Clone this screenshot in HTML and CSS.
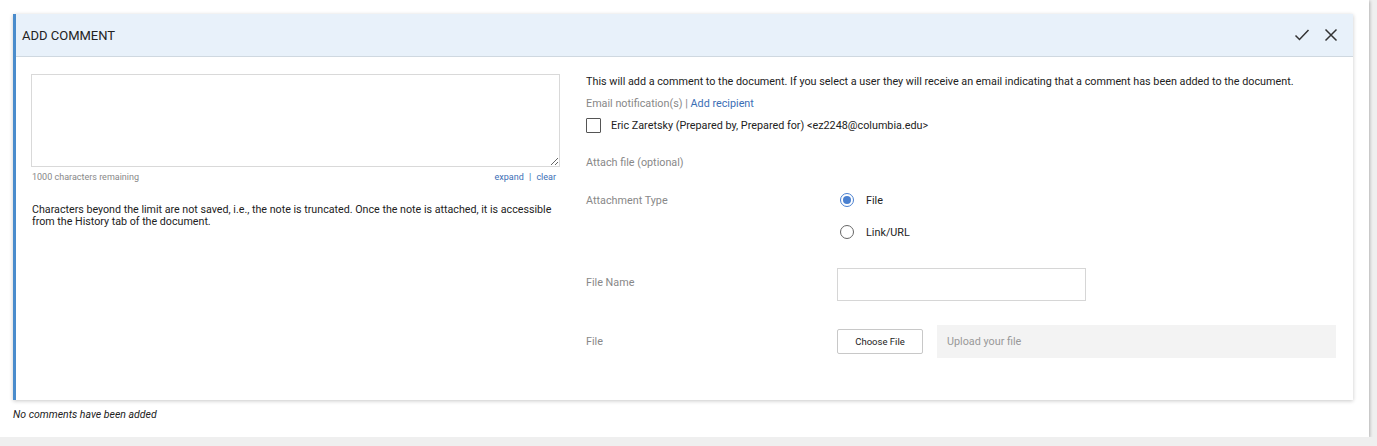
FILE: index.html
```html
<!DOCTYPE html>
<html>
  <head>
    <title>Add Comment</title>
    <link rel="stylesheet" href="styles.css">
  </head>
  <body>
    <div class="page">
      <div class="panel">
        <div class="panel-header">
          <span class="panel-title">ADD COMMENT</span>
          <div class="panel-actions">
            <svg width="16" height="16" viewBox="0 0 16 16" fill="none" stroke="#333" stroke-width="1.5">
              <path d="M1.5 8.5 L5.5 12.5 L14.5 3"/>
            </svg>
            <svg width="14" height="14" viewBox="0 0 14 14" fill="none" stroke="#333" stroke-width="1.5">
              <path d="M1.5 1.5 L12.5 12.5 M12.5 1.5 L1.5 12.5"/>
            </svg>
          </div>
        </div>
        <div class="panel-body">
          <div class="note-col">
            <textarea class="note-input"></textarea>
            <div class="note-meta">
              <span>1000 characters remaining</span>
              <span class="note-links"><a href="#">expand</a> <span class="sep">|</span> <a href="#">clear</a></span>
            </div>
            <p class="note-help">Characters beyond the limit are not saved, i.e., the note is truncated. Once the note is attached, it is accessible from the History tab of the document.</p>
          </div>
          <div class="form-col">
            <p class="intro">This will add a comment to the document. If you select a user they will receive an email indicating that a comment has been added to the document.</p>
            <div class="muted">Email notification(s) | <a href="#">Add recipient</a></div>
            <label class="recipient">
              <span class="box"></span>
              Eric Zaretsky (Prepared by, Prepared for) &lt;ez2248@columbia.edu&gt;
            </label>
            <div class="muted attach-title">Attach file (optional)</div>
            <div class="field-grid">
              <div class="muted field-label type-label">Attachment Type</div>
              <div class="radios">
                <label class="radio"><span class="dot checked"></span>File</label>
                <label class="radio"><span class="dot"></span>Link/URL</label>
              </div>
              <div class="muted field-label">File Name</div>
              <div><input type="text" class="name-input"></div>
              <div class="muted field-label">File</div>
              <div class="file-row">
                <button class="choose">Choose File</button>
                <div class="upload">Upload your file</div>
              </div>
            </div>
          </div>
        </div>
      </div>
      <div class="empty">No comments have been added</div>
    </div>
  </body>
</html>
```

FILE: styles.css
```css
/* page frame */
body {
  margin: 0;
  background: #efefef;
  font-family: Roboto, "Liberation Sans", sans-serif;
  color: #222;
}
.page {
  width: 1369px;
  height: 437px;
  background: #fff;
  box-shadow: 1px 1px 3px rgba(0, 0, 0, 0.25);
  padding: 14px 0 0 13px;
  box-sizing: border-box;
}
a {
  color: #3b6eb5;
  text-decoration: none;
}

/* panel */
.panel {
  width: 1340px;
  height: 386px;
  box-sizing: border-box;
  border-left: 3px solid #4a8ccc;
  box-shadow: 0 1px 4px rgba(0, 0, 0, 0.22);
  background: #fff;
}
.panel-header {
  height: 43px;
  box-sizing: border-box;
  background: #e8f1fa;
  border-bottom: 1px solid #cfd8e0;
  display: flex;
  align-items: center;
  justify-content: space-between;
  padding: 0 15px 0 6px;
}
.panel-title {
  font-size: 13px;
  color: #222;
}
.panel-actions {
  display: flex;
  align-items: center;
  gap: 14px;
}
.panel-body {
  display: grid;
  grid-template-columns: 529px 750px;
  column-gap: 26px;
  padding: 17px 0 0 15px;
}

/* left column */
.note-input {
  display: block;
  width: 529px;
  height: 93px;
  box-sizing: border-box;
  border: 1px solid #d9d9d9;
  margin: 0;
}
.note-meta {
  display: flex;
  justify-content: space-between;
  font-size: 9px;
  color: #888;
  padding: 5px 4px 0 1px;
}
.note-links .sep {
  color: #3b6eb5;
  margin: 0 3px;
}
.note-help {
  font-size: 10.7px;
  line-height: 12px;
  margin: 22px 0 0 1px;
  color: #222;
}

/* right column */
.form-col {
  font-size: 10.8px;
}
.intro {
  margin: 1px 0 0;
  line-height: 13px;
}
.muted {
  color: #888;
}
.form-col > .muted {
  margin-top: 9px;
  line-height: 13px;
}
.recipient {
  display: flex;
  align-items: center;
  gap: 10px;
  margin-top: 8px;
  color: #222;
}
.box {
  width: 13px;
  height: 13px;
  border: 1px solid #555;
  border-radius: 1px;
}
.form-col > .attach-title {
  margin-top: 23px;
}
.field-grid {
  display: grid;
  grid-template-columns: 251px 1fr;
  align-items: center;
  margin-top: 24px;
}
.type-label {
  align-self: start;
  padding-top: 1px;
}
.radios {
  display: flex;
  flex-direction: column;
  gap: 18px;
}
.radio {
  display: flex;
  align-items: center;
  gap: 12px;
  color: #222;
  padding-left: 3px;
}
.dot {
  width: 12px;
  height: 12px;
  border: 1px solid #666;
  border-radius: 50%;
  display: flex;
  align-items: center;
  justify-content: center;
}
.dot.checked {
  border-color: #4a80d0;
}
.dot.checked::after {
  content: "";
  width: 8px;
  height: 8px;
  border-radius: 50%;
  background: #4a80d0;
}
.field-label {
  line-height: 13px;
}
.name-input {
  width: 249px;
  height: 33px;
  box-sizing: border-box;
  border: 1px solid #d6d6d6;
  margin: 29px 0 24px;
  display: block;
}
.file-row {
  display: flex;
  align-items: center;
  gap: 14px;
}
.choose {
  width: 86px;
  height: 25px;
  background: #fff;
  border: 1px solid #c8c8c8;
  border-radius: 2px;
  font-family: Roboto, "Liberation Sans", sans-serif;
  font-size: 9.5px;
  color: #222;
}
.upload {
  width: 399px;
  height: 33px;
  background: #f3f3f3;
  color: #999;
  display: flex;
  align-items: center;
  padding-left: 10px;
  box-sizing: border-box;
}

.empty {
  font-size: 10.5px;
  font-style: italic;
  color: #222;
  margin-top: 8px;
}
```
